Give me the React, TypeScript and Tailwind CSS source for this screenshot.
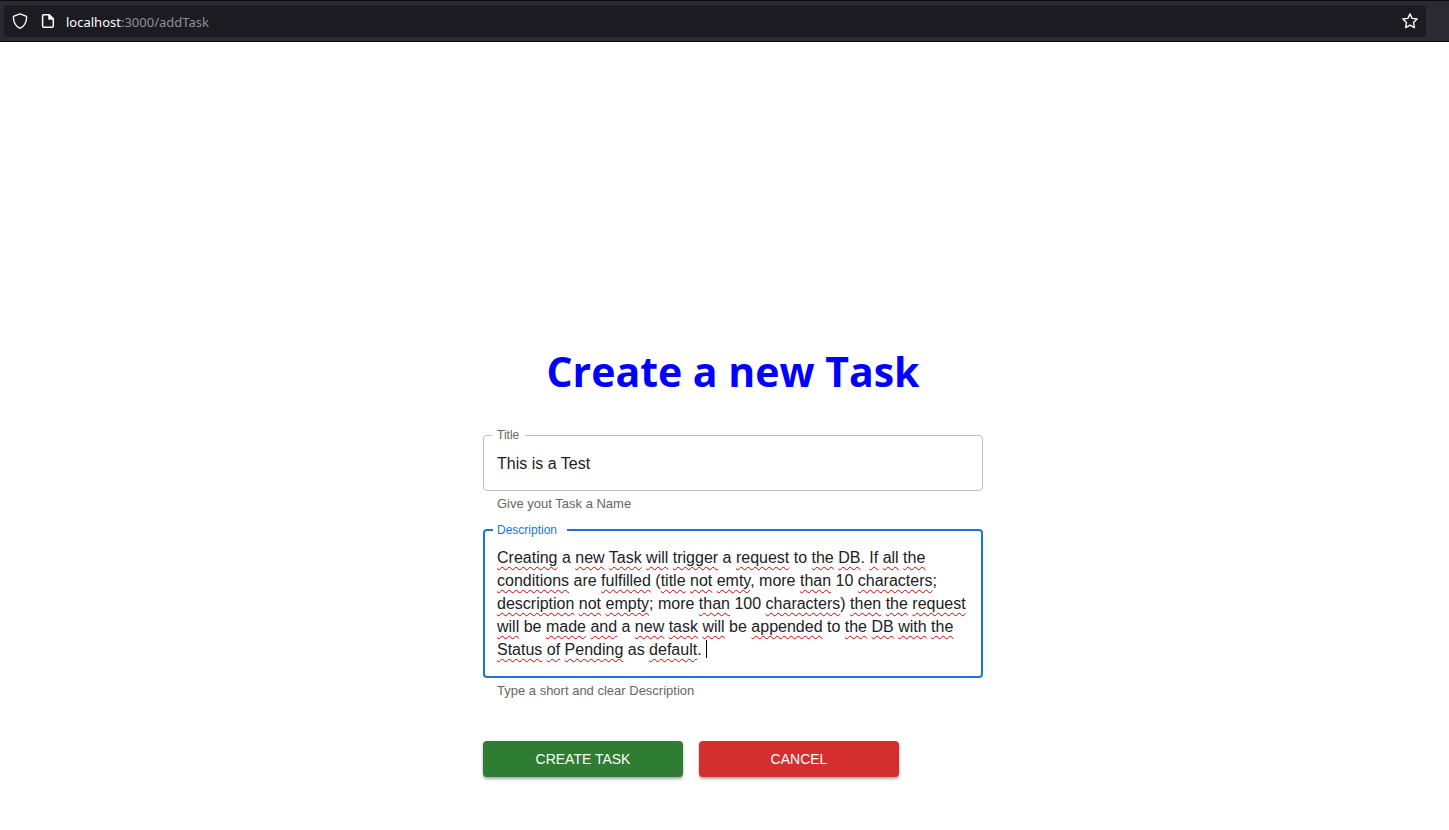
import { useState } from "react";

const INITIAL_DESCRIPTION =
  "Creating a new Task will trigger a request to the DB. If all the conditions are fulfilled (title not emty, more than 10 characters; description not empty; more than 100 characters) then the request will be made and a new task will be appended to the DB with the Status of Pending as default. ";

// Words the spell checker's dictionary accepts.
const KNOWN_WORDS = new Set(["a", "to", "are", "more", "be", "as"]);

function ShieldIcon() {
  return (
    <svg viewBox="0 0 16 16" className="size-4" fill="none" stroke="currentColor" strokeWidth="1.4" strokeLinejoin="round" aria-hidden="true">
      <path d="M8 .8 L14 3.1 Q14.7 3.4 14.6 4.2 C14.5 9.2 12.6 13.2 8 15.3 C3.4 13.2 1.5 9.2 1.4 4.2 Q1.3 3.4 2 3.1 Z" />
    </svg>
  );
}

function PageIcon() {
  return (
    <svg viewBox="0 0 16 16" className="size-4" fill="none" stroke="currentColor" strokeWidth="1.5" strokeLinejoin="round" aria-hidden="true">
      <path d="M3.6 1.8 H9.2 L13.3 5.8 V13 Q13.3 14.2 12.1 14.2 H3.8 Q2.6 14.2 2.6 13 V2.8 Q2.6 1.8 3.6 1.8 Z" />
      <path d="M9 2 V6 H13.2 Z" fill="currentColor" />
    </svg>
  );
}

function StarIcon() {
  return (
    <svg viewBox="0 0 16 16" className="size-4" fill="none" stroke="currentColor" strokeWidth="1.4" strokeLinejoin="round" aria-hidden="true">
      <path d="M8 .9 L10.1 5.4 L15.1 6 L11.5 9.5 L12.4 14.6 L8 12.2 L3.6 14.6 L4.5 9.5 L.9 6 L5.9 5.4 Z" />
    </svg>
  );
}

function AddressBar() {
  return (
    <header className="flex h-[42px] items-center border-y border-[#0c0c0d] bg-[#2b2a33] pr-[23px] pl-1">
      <div className="flex h-8 grow items-center gap-3 rounded bg-[#1c1b22] px-2 text-[#fbfbfe]">
        <button type="button" aria-label="Tracking protection"><ShieldIcon /></button>
        <button type="button" aria-label="Site information"><PageIcon /></button>
        <a href="/addTask" className="-ml-0.5 grow pt-0.5 font-['Noto_Sans','Open_Sans',sans-serif] text-[13px] leading-5 text-[#8f8f97]">
          <span className="text-[#fbfbfe]">localhost</span>:3000/addTask
        </a>
        <button type="button" aria-label="Bookmark this page"><StarIcon /></button>
      </div>
    </header>
  );
}

// Mirrors the textarea's text invisibly to carry the spelling marks and the caret.
function SpellingMarks({ text }: { text: string }) {
  return (
    <div aria-hidden="true" className="pointer-events-none absolute inset-0 px-3 py-[15px] leading-[23px] break-words whitespace-pre-wrap text-transparent">
      {text.split(/([A-Za-z]+)/).map((part, i) =>
        /^[A-Za-z]+$/.test(part) && !KNOWN_WORDS.has(part) ? (
          <span key={i} className="underline decoration-[#d70000] decoration-wavy decoration-[1px] underline-offset-[3px] [text-decoration-skip-ink:none]">{part}</span>
        ) : (
          part
        ),
      )}
      <span className="inline-block h-[18px] border-l border-black align-text-bottom" />
    </div>
  );
}

export default function App() {
  const [title, setTitle] = useState("This is a Test");
  const [description, setDescription] = useState(INITIAL_DESCRIPTION);

  return (
    <div className="min-h-screen bg-white font-['Liberation_Sans',Arial,sans-serif]">
      <AddressBar />
      <main className="flex flex-col items-center pt-[299px] pr-4 pb-[53px] pl-[33px]">
        <h1 className="font-['Open_Sans','Noto_Sans',sans-serif] text-[41px] leading-[60px] font-bold text-[#0000ff]">
          Create a new Task
        </h1>
        <form className="mt-[34px] w-full max-w-[500px]" onSubmit={(e) => e.preventDefault()}>
          <div className="relative h-14 rounded border border-[#c0c0c0]">
            <label htmlFor="title" className="absolute -top-[11px] left-2 bg-white pr-1.5 pl-[5px] text-xs leading-5 text-[#666666]">
              Title
            </label>
            <input
              id="title"
              aria-describedby="title-help"
              value={title}
              onChange={(e) => setTitle(e.target.value)}
              className="size-full bg-transparent px-[13px] pt-0.5 text-base text-[#212121] outline-none"
            />
          </div>
          <p id="title-help" className="mt-[3px] ml-3.5 text-[13px] leading-5 text-[#666666]">Give yout Task a Name</p>

          <div className="relative mt-[15px] rounded border-2 border-[#1976d2]">
            <label htmlFor="description" className="absolute -top-[11px] left-2 z-10 bg-white pr-2.5 pl-1 text-xs leading-5 text-[#1976d2]">
              Description
            </label>
            <textarea
              id="description"
              aria-describedby="description-help"
              rows={5}
              spellCheck={false}
              value={description}
              onChange={(e) => setDescription(e.target.value)}
              className="block w-full resize-none overflow-hidden bg-transparent px-3 py-[15px] text-base leading-[23px] text-[#212121] caret-transparent outline-none"
            />
            <SpellingMarks text={description} />
          </div>
          <p id="description-help" className="mt-[3px] ml-3.5 text-[13px] leading-5 text-[#666666]">Type a short and clear Description</p>

          <div className="mt-10 flex gap-4">
            <button type="submit" className="h-9 w-[200px] rounded bg-[#2e7d32] text-sm text-white shadow-[0_2px_3px_rgba(0,0,0,0.35)]">
              CREATE TASK
            </button>
            <button type="button" className="h-9 w-[200px] rounded bg-[#d32f2f] text-sm text-white shadow-[0_2px_3px_rgba(0,0,0,0.35)]">
              CANCEL
            </button>
          </div>
        </form>
      </main>
    </div>
  );
}
